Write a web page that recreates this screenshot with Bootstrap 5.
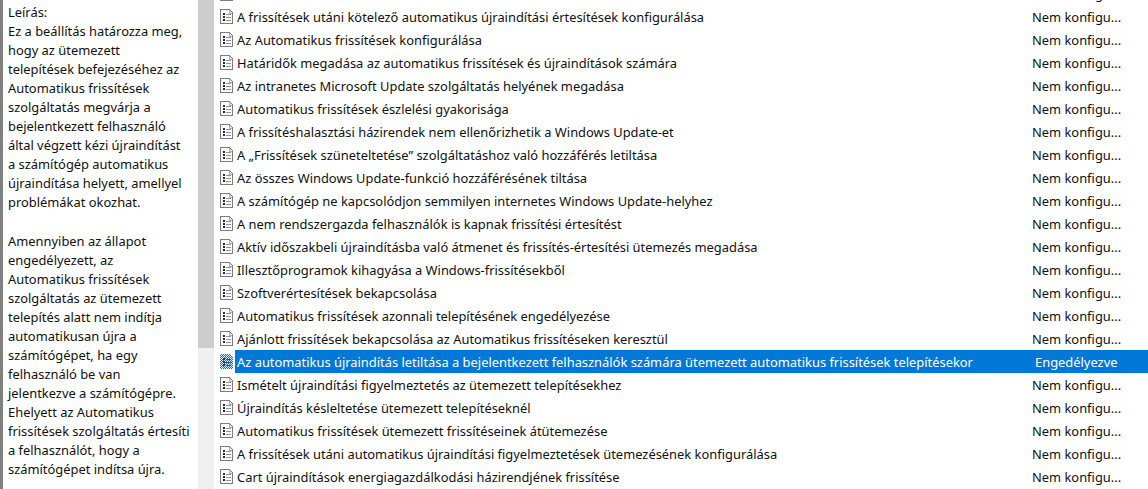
<!DOCTYPE html>
<html lang="hu">
<head>
    <meta charset="UTF-8">
    <title>Helyi csoportházirend</title>
    <link href="https://cdn.jsdelivr.net/npm/bootstrap@5.3.0/dist/css/bootstrap.min.css" rel="stylesheet">
    <style>
        html, body { height: 489px; overflow: hidden; background: #fff; }
        body { font-family: "Noto Sans", "Open Sans", sans-serif; font-size: 12.9px; color: #111; }
        .gp-page { height: 489px; overflow: hidden; }
        .gp-desc { width: 198px; flex: none; border-left: 3px solid #808080; padding: 3px 0 0 5px; line-height: 19.05px; }
        .gp-desc p { margin: 0 0 19px; }
        .gp-track { width: 16px; flex: none; background: #f0f0f0; }
        .gp-thumb { height: 348px; background: #cdcdcd; }
        .gp-list { flex: 1 1 auto; margin-top: -18px; }
        .gp-row { height: 23px; line-height: 25px; white-space: nowrap; }
        .gp-icon { width: 13px; height: 15px; margin: 0 2px 0 6px; flex: none; }
        .gp-name { width: 797px; height: 23px; flex: none; padding-left: 2px; }
        .gp-state { height: 23px; }
        .gp-sel .gp-name { background: #0078d7; color: #fff; }
        .gp-sel .gp-state { background: #0078d7; color: #fff; flex: 1 1 auto; padding-left: 3px; }
    </style>
</head>
<body>
<div class="gp-page d-flex">
    <div class="gp-desc">
        <p>Leírás:<br>Ez a beállítás határozza meg,<br>hogy az ütemezett<br>telepítések befejezéséhez az<br>Automatikus frissítések<br>szolgáltatás megvárja a<br>bejelentkezett felhasználó<br>által végzett kézi újraindítást<br>a számítógép automatikus<br>újraindítása helyett, amellyel<br>problémákat okozhat.</p>
        <p>Amennyiben az állapot<br>engedélyezett, az<br>Automatikus frissítések<br>szolgáltatás az ütemezett<br>telepítés alatt nem indítja<br>automatikusan újra a<br>számítógépet, ha egy<br>felhasználó be van<br>jelentkezve a számítógépre.<br>Ehelyett az Automatikus<br>frissítések szolgáltatás értesíti<br>a felhasználót, hogy a<br>számítógépet indítsa újra.</p>
    </div>
    <div class="gp-track"><div class="gp-thumb"></div></div>
    <div class="gp-list" id="policyList"></div>
</div>

<script src="https://cdn.jsdelivr.net/npm/bootstrap@5.3.0/dist/js/bootstrap.bundle.min.js"></script>
<script>
    const policies = [
        '',
        'A frissítések utáni kötelező automatikus újraindítási értesítések konfigurálása',
        'Az Automatikus frissítések konfigurálása',
        'Határidők megadása az automatikus frissítések és újraindítások számára',
        'Az intranetes Microsoft Update szolgáltatás helyének megadása',
        'Automatikus frissítések észlelési gyakorisága',
        'A frissítéshalasztási házirendek nem ellenőrizhetik a Windows Update-et',
        'A „Frissítések szüneteltetése” szolgáltatáshoz való hozzáférés letiltása',
        'Az összes Windows Update-funkció hozzáférésének tiltása',
        'A számítógép ne kapcsolódjon semmilyen internetes Windows Update-helyhez',
        'A nem rendszergazda felhasználók is kapnak frissítési értesítést',
        'Aktív időszakbeli újraindításba való átmenet és frissítés-értesítési ütemezés megadása',
        'Illesztőprogramok kihagyása a Windows-frissítésekből',
        'Szoftverértesítések bekapcsolása',
        'Automatikus frissítések azonnali telepítésének engedélyezése',
        'Ajánlott frissítések bekapcsolása az Automatikus frissítéseken keresztül',
        'Az automatikus újraindítás letiltása a bejelentkezett felhasználók számára ütemezett automatikus frissítések telepítésekor',
        'Ismételt újraindítási figyelmeztetés az ütemezett telepítésekhez',
        'Újraindítás késleltetése ütemezett telepítéseknél',
        'Automatikus frissítések ütemezett frissítéseinek átütemezése',
        'A frissítések utáni automatikus újraindítási figyelmeztetések ütemezésének konfigurálása',
        'Cart újraindítások energiagazdálkodási házirendjének frissítése'
    ];

    const icon = '<svg class="gp-icon" viewBox="0 0 13 15" shape-rendering="crispEdges"><path d="M.5.500h8.500l3.500 3.500v10.500H.5z" fill="#fcfcfc" stroke="#7d7d7d"/><path d="M9 1v3h3" fill="#e4e4e4" stroke="#b0b0b0"/><path d="M3 4h2v2H3zM3 7h2v2H3zM3 10h2v2H3z" fill="#2a2a2a"/><path d="M6 5h5v1H6zM6 8h5v1H6zM6 11h5v1H6z" fill="#8f8fae"/></svg>';

    // selected row: the icon is dithered with the highlight colour
    const iconSel = '<svg class="gp-icon" viewBox="0 0 13 15" shape-rendering="crispEdges"><defs><pattern id="dither" width="2" height="2" patternUnits="userSpaceOnUse"><rect width="2" height="2" fill="#0078d7"/><rect width="1" height="1" fill="#d6e9f9"/><rect x="1" y="1" width="1" height="1" fill="#d6e9f9"/></pattern></defs><path d="M0 0h9l4 4v11H0z" fill="url(#dither)"/><path d="M3 4h2v2H3zM3 7h2v2H3zM3 10h2v2H3z" fill="#0a3f70"/><path d="M6 5h5v1H6zM6 8h5v1H6zM6 11h5v1H6z" fill="#0a5aa0"/></svg>';

    document.getElementById('policyList').innerHTML = policies.map((name, i) => {
        const sel = i === 16;
        return `<div class="gp-row d-flex align-items-center ${sel ? 'gp-sel' : ''}">${sel ? iconSel : icon}
            <span class="gp-name">${name}</span>
            <span class="gp-state">${sel ? 'Engedélyezve' : 'Nem konfigu...'}</span></div>`;
    }).join('');
</script>
</body>
</html>
